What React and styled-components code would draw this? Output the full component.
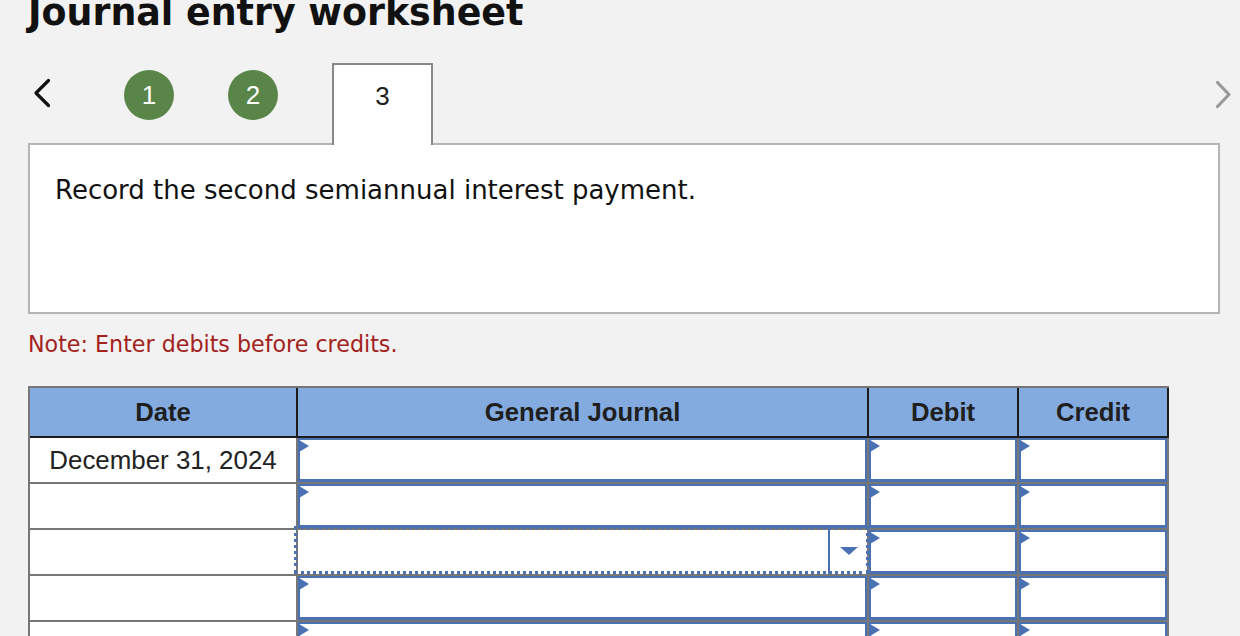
import React from 'react';
import styled, { createGlobalStyle } from 'styled-components';

const GlobalStyle = createGlobalStyle`
  html, body {
    margin: 0;
    padding: 0;
    background: #f2f2f2;
  }
`;

const Page = styled.div`
  width: 1240px;
  height: 636px;
  box-sizing: border-box;
  padding: 0 5px 0 28px;
  overflow: hidden;
  background: #f2f2f2;
`;

const Heading = styled.h1`
  margin: -5px 0 0;
  font-family: "DejaVu Sans", Verdana, sans-serif;
  font-size: 36.4px;
  line-height: 36px;
  font-weight: bold;
  color: #111;
`;

const Nav = styled.div`
  display: flex;
  align-items: flex-start;
  height: 80px;
  margin-top: 32px;
`;

const PrevButton = styled.div`
  width: 96px;
  padding-left: 5px;
  margin-top: 15px;
  box-sizing: border-box;
  line-height: 0;
`;

const NextButton = styled.div`
  margin-left: auto;
  margin-top: 17px;
  line-height: 0;
`;

const Steps = styled.div`
  display: flex;
  align-items: flex-start;
  gap: 54px;
`;

const StepCircle = styled.div`
  width: 50px;
  height: 50px;
  margin-top: 7px;
  border-radius: 50%;
  background: #5a8549;
  color: #fff;
  display: flex;
  align-items: center;
  justify-content: center;
  font-family: "Liberation Sans", Arial, sans-serif;
  font-size: 26px;
  line-height: 50px;
`;

const ActiveTab = styled.div`
  position: relative;
  z-index: 1;
  width: 101px;
  height: 82px;
  box-sizing: border-box;
  border: 2px solid #888;
  border-bottom: none;
  background: #fff;
  display: flex;
  justify-content: center;
  padding-top: 16px;
  font-family: "Liberation Sans", Arial, sans-serif;
  font-size: 26px;
  line-height: 30px;
  color: #222;
`;

const QuestionBox = styled.div`
  width: 1192px;
  height: 171px;
  box-sizing: border-box;
  border: 2px solid #b5b5b5;
  background: #fff;
  padding: 30px 25px;
  font-family: "DejaVu Sans", Verdana, sans-serif;
  font-size: 26px;
  line-height: 30px;
  color: #111;
`;

const Note = styled.div`
  margin-top: 17px;
  font-family: "DejaVu Sans", Verdana, sans-serif;
  font-size: 22.2px;
  color: #a3221c;
`;

const Table = styled.div`
  margin-top: 29px;
  width: 1141px;
`;

const Grid = styled.div`
  display: grid;
  grid-template-columns: 266px 569px 148px 148px;
  column-gap: 2px;
`;

const HeaderRow = styled(Grid)`
  background: #1c1c1c;
  border-top: 2px solid #777;
  border-left: 2px solid #777;
  padding: 0 2px 2px 0;
`;

const HeaderCell = styled.div`
  height: 48px;
  background: #83abe0;
  text-align: center;
  font-family: "Liberation Sans", Arial, sans-serif;
  font-weight: bold;
  font-size: 25.7px;
  line-height: 48px;
  color: #1f1f1f;
`;

const BodyRow = styled(Grid)`
  background: #777;
  padding: 0 2px 2px 2px;
`;

const DateCell = styled.div`
  height: 44px;
  background: #fff;
  text-align: center;
  font-family: "Liberation Sans", Arial, sans-serif;
  font-size: 25.9px;
  line-height: 45px;
  color: #222;
`;

const InputCell = styled.div`
  position: relative;
  height: 44px;
  box-sizing: border-box;
  background: #fff;
  border: 2px solid #4a72b3;
  border-bottom-width: 3px;
`;

const Marker = styled.span`
  position: absolute;
  left: -1px;
  top: 0;
  width: 0;
  height: 0;
  border-top: 6px solid transparent;
  border-bottom: 6px solid transparent;
  border-left: 10px solid #4a72b3;
`;

const FocusCell = styled.div`
  position: relative;
  z-index: 2;
  height: 44px;
  background: #fff;
`;

const FocusFrame = styled.div`
  position: absolute;
  top: -4px;
  left: -4px;
  right: -2px;
  bottom: 0;
  border: 3px dotted #4a72b3;
  pointer-events: none;
`;

const DropDivider = styled.span`
  position: absolute;
  left: 530px;
  top: -3px;
  bottom: 0;
  width: 2px;
  background: #4a72b3;
`;

const DropCaret = styled.span`
  position: absolute;
  left: 542px;
  top: 17px;
  width: 0;
  height: 0;
  border-left: 9px solid transparent;
  border-right: 9px solid transparent;
  border-top: 8px solid #4a72b3;
`;

const rows = [
  { date: 'December 31, 2024' },
  { date: '' },
  { date: '', focused: true },
  { date: '' },
  { date: '' },
];

function Entry() {
  return (
    <InputCell>
      <Marker />
    </InputCell>
  );
}

export default function App() {
  return (
    <Page>
      <GlobalStyle />
      <Heading>Journal entry worksheet</Heading>
      <Nav>
        <PrevButton>
          <svg width="18" height="30" viewBox="0 0 18 30">
            <path d="M15.5 2.5 L3 15 L15.5 27.5" fill="none" stroke="#111" strokeWidth="3.2" strokeLinecap="round" strokeLinejoin="round" />
          </svg>
        </PrevButton>
        <Steps>
          <StepCircle>1</StepCircle>
          <StepCircle>2</StepCircle>
          <ActiveTab>3</ActiveTab>
        </Steps>
        <NextButton>
          <svg width="22" height="30" viewBox="0 0 22 30">
            <path d="M4.5 2.5 L16 14.5 L4.5 26.5" fill="none" stroke="#9a9a9a" strokeWidth="3.2" strokeLinecap="round" strokeLinejoin="round" />
          </svg>
        </NextButton>
      </Nav>
      <QuestionBox>Record the second semiannual interest payment.</QuestionBox>
      <Note>Note: Enter debits before credits.</Note>
      <Table>
        <HeaderRow>
          <HeaderCell>Date</HeaderCell>
          <HeaderCell>General Journal</HeaderCell>
          <HeaderCell>Debit</HeaderCell>
          <HeaderCell>Credit</HeaderCell>
        </HeaderRow>
        {rows.map((row, i) => (
          <BodyRow key={i}>
            <DateCell>{row.date}</DateCell>
            {row.focused ? (
              <FocusCell>
                <FocusFrame />
                <DropDivider />
                <DropCaret />
              </FocusCell>
            ) : (
              <Entry />
            )}
            <Entry />
            <Entry />
          </BodyRow>
        ))}
      </Table>
    </Page>
  );
}
